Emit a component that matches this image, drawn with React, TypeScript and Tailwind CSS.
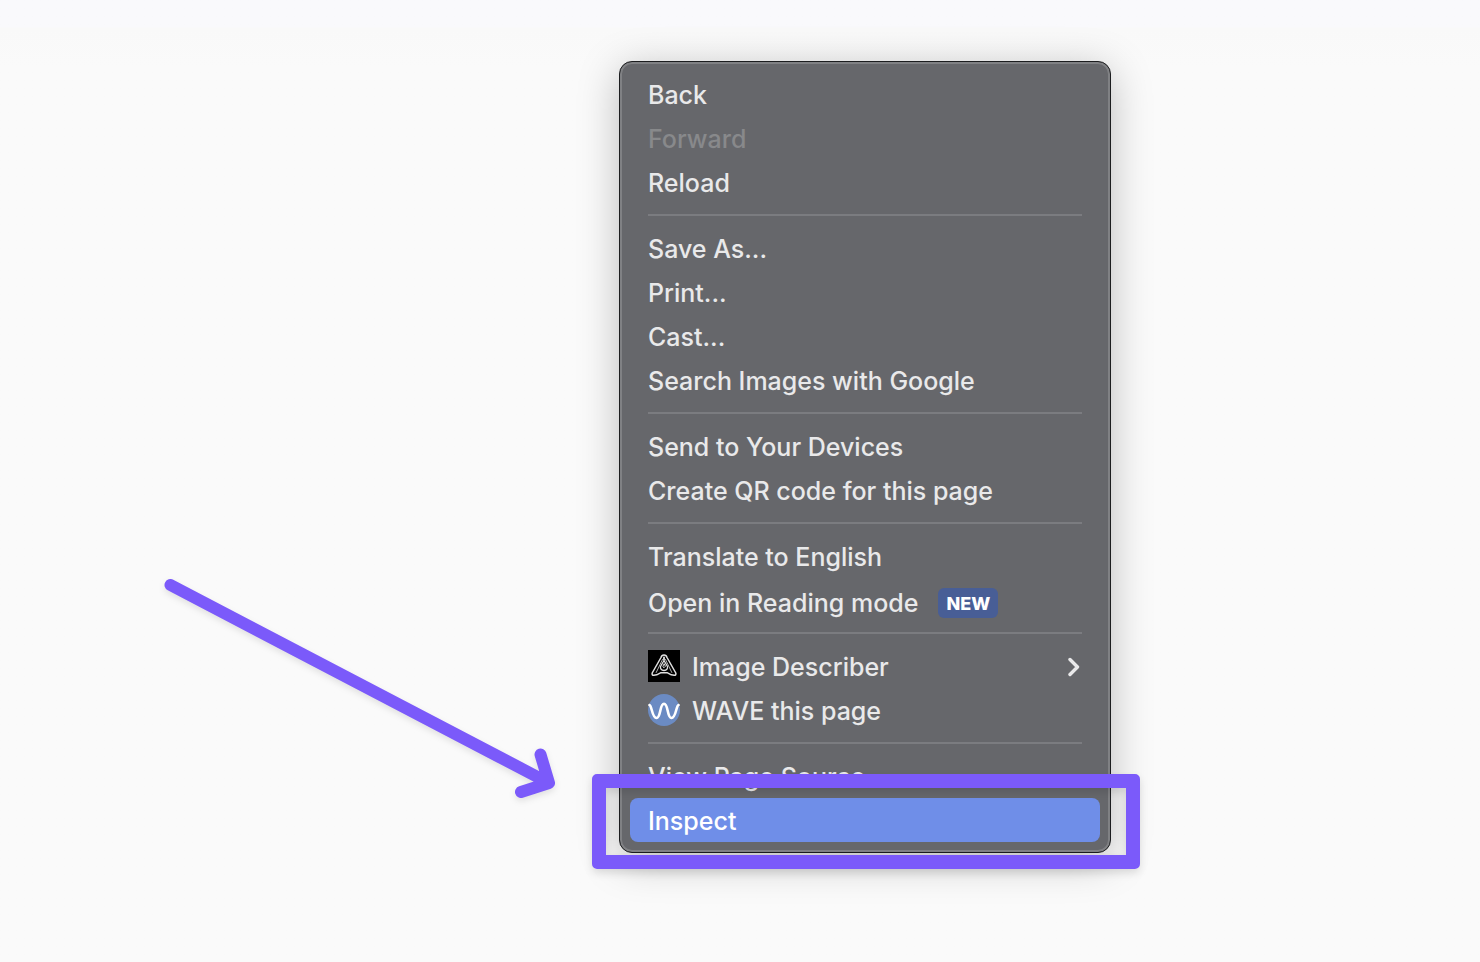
import type { ReactNode } from "react";

type Item = {
  label: string;
  disabled?: boolean;
  badge?: string;
  icon?: ReactNode;
  submenu?: boolean;
  highlighted?: boolean;
};

function DescriberIcon() {
  return (
    <svg viewBox="0 0 32 32" className="size-8 shrink-0" fill="none" aria-hidden="true">
      <rect width="32" height="32" fill="#000" />
      <g stroke="#e0e0e0" strokeLinejoin="round" strokeLinecap="round">
        <path
          d="M13 7.500Q13.600 5 16 5Q18.400 5 19 7.500L27.800 23Q28.400 25.300 26.200 25.300L23.300 24.800L19.500 22.800H12.500L8.700 24.800L5.800 25.300Q3.600 25.300 4.200 23Z"
          strokeWidth="1.500"
        />
        <path d="M14.500 9.500L8.200 22.500M17.500 9.500L23.800 22.500" strokeWidth="0.800" />
        <path d="M16 10.500L12.500 16.500Q12 20 16 20.500Q20 20 19.500 16.500Z" strokeWidth="1.300" />
        <path d="M16 14L14.800 16.600Q16 19 17.200 16.600Z" strokeWidth="1" />
        <path d="M16 7.500V9.500" strokeWidth="1.800" />
      </g>
    </svg>
  );
}

function WaveIcon() {
  return (
    <svg viewBox="0 0 32 32" className="size-8 shrink-0" fill="none" aria-hidden="true">
      <circle cx="16" cy="16" r="16" fill="#6b8bc3" />
      <path
        d="M1.500 11C4 12 4 24 8.500 24C13 24 11.500 9.800 16 9.800C20.500 9.800 19 24 23.500 24C28 24 28 12 30.500 11"
        stroke="#fff"
        strokeWidth="2.600"
        strokeLinecap="round"
      />
    </svg>
  );
}

const groups: Item[][] = [
  [{ label: "Back" }, { label: "Forward", disabled: true }, { label: "Reload" }],
  [
    { label: "Save As..." },
    { label: "Print..." },
    { label: "Cast..." },
    { label: "Search Images with Google" },
  ],
  [{ label: "Send to Your Devices" }, { label: "Create QR code for this page" }],
  [{ label: "Translate to English" }, { label: "Open in Reading mode", badge: "NEW" }],
  [
    { label: "Image Describer", icon: <DescriberIcon />, submenu: true },
    { label: "WAVE this page", icon: <WaveIcon /> },
  ],
  [{ label: "View Page Source" }, { label: "Inspect", highlighted: true }],
];

function MenuItem({ item }: { item: Item }) {
  const tone = item.disabled
    ? "text-[#88898b]"
    : item.highlighted
      ? "bg-[#6f8ee8] text-white"
      : "text-[#e9e9ea]";
  return (
    <li role="none" className="relative">
      <button
        type="button"
        role="menuitem"
        disabled={item.disabled}
        className={`flex h-11 w-full items-center rounded-lg px-[18px] text-left whitespace-nowrap ${item.badge ? "pt-1" : ""} ${tone}`}
      >
        {item.icon && <span className="mr-3">{item.icon}</span>}
        <span className="pt-0.5">{item.label}</span>
        {item.badge && (
          <span className="mt-0.5 ml-5 flex h-[30px] items-center rounded-md bg-[#485e96] px-2 pt-0.5 text-lg font-extrabold text-white">
            {item.badge}
          </span>
        )}
        {item.submenu && (
          <svg viewBox="0 0 12 20" className="mt-0.5 mr-0.5 ml-auto h-5 w-3" fill="none" aria-hidden="true">
            <path d="M2 2.500L9.500 10L2 17.500" stroke="#e9e9ea" strokeWidth="3.400" strokeLinecap="round" strokeLinejoin="round" />
          </svg>
        )}
      </button>
      {item.highlighted && (
        <div className="pointer-events-none absolute -top-6 -right-10 -bottom-[27px] -left-[38px] rounded-[5px] border-[14px] border-[#7b5afa] shadow-[0_4px_8px_rgba(0,0,0,0.12),inset_0_4px_8px_rgba(0,0,0,0.12)]" />
      )}
    </li>
  );
}

export default function App() {
  return (
    <main className="min-h-screen bg-[#fafafa] bg-linear-to-b from-[#f9f9fc] from-[27px] via-[#f9f9f9] via-[28px] to-[#fafafa] to-[68px] pt-[61px] pb-[109px] pl-[250px] font-['Inter',sans-serif] text-[25px] leading-8 font-medium">
      <div className="relative mx-auto w-[492px]">
        <div
          role="menu"
          aria-label="Page context menu"
          className="rounded-[13px] border border-[#1c1d1f] bg-[#66676b] p-2.5 shadow-[inset_0_0_0_2px_#808184,0_8px_40px_rgba(0,0,0,0.25)]"
        >
          {groups.map((items, index) => (
            <ul
              key={items[0].label}
              role="group"
              className={index > 0 ? "before:mx-[18px] before:my-2.5 before:block before:h-0.5 before:bg-[#7b7c80]" : ""}
            >
              {items.map((item) => (
                <MenuItem key={item.label} item={item} />
              ))}
            </ul>
          ))}
        </div>
        <svg
          viewBox="0 0 420 240"
          className="pointer-events-none absolute bottom-[33px] -left-[469px] h-60 w-[420px] overflow-visible drop-shadow-[0_3px_3px_rgba(0,0,0,0.1)]"
          fill="none"
          aria-hidden="true"
        >
          <path
            d="M20.500 5L399 203M390.500 174.500L399 203L371 212"
            stroke="#7b5afa"
            strokeWidth="12"
            strokeLinecap="round"
            strokeLinejoin="round"
          />
        </svg>
      </div>
    </main>
  );
}
